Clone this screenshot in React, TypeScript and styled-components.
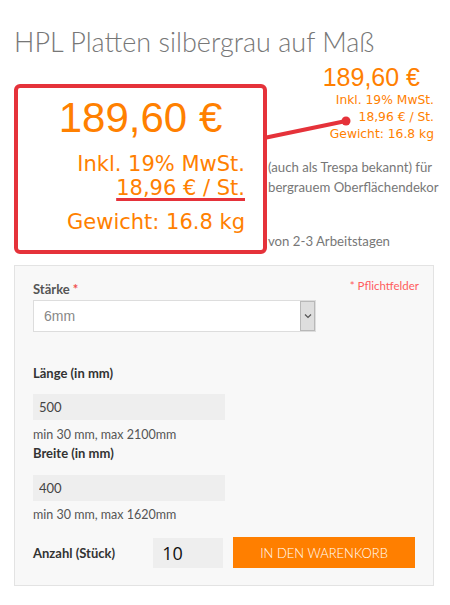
import React from 'react'
import styled, { createGlobalStyle } from 'styled-components'

const GlobalStyle = createGlobalStyle`
  html, body {
    margin: 0;
    padding: 0;
    background: #ffffff;
  }
  * {
    box-sizing: border-box;
  }
`

const ORANGE = '#ff8000'
const RED = '#e5323a'

const Page = styled.div`
  position: relative;
  width: 450px;
  padding: 0 16px 0 14px;
  font-family: 'Lato', 'Open Sans', sans-serif;
`

const Title = styled.h1`
  margin: 0;
  padding-top: 25px;
  font-size: 27px;
  line-height: 33px;
  font-weight: 300;
  color: #777777;
`

const PriceBox = styled.div`
  margin-top: 4px;
  text-align: right;
  color: ${ORANGE};
`

const BigPrice = styled.div`
  font-family: 'Liberation Sans', Arial, sans-serif;
  font-size: 25px;
  line-height: 30px;
  margin-right: 14px;
`

const PriceLine = styled.div`
  font-family: 'DejaVu Sans', Verdana, sans-serif;
  font-size: 12.3px;
  line-height: 17px;
`

const Description = styled.div`
  margin-top: 14px;
  font-size: 13.2px;
  line-height: 20px;
  color: #777777;
`

const Paragraph = styled.p`
  margin: 0 0 14px;
`

// the start of each line sits under the callout
const Line = styled.div`
  white-space: nowrap;
  padding-left: 254px;
  min-height: 20px;
`

// Callout annotation laid over the description
const Callout = styled.div`
  position: absolute;
  left: 14px;
  top: 84px;
  width: 253px;
  height: 170px;
  border: 4px solid ${RED};
  border-radius: 6px;
  background: #ffffff;
  color: ${ORANGE};
  padding: 6px 18px 0 0;
  text-align: right;
`

const CalloutPrice = styled.div`
  font-family: 'Liberation Sans', Arial, sans-serif;
  font-size: 42px;
  line-height: 48px;
  text-align: center;
  padding-left: 18px;
`

const CalloutLine = styled.div<{ $gap?: number }>`
  font-family: 'DejaVu Sans', Verdana, sans-serif;
  font-size: 21px;
  line-height: 24px;
  margin-top: ${p => p.$gap ?? 0}px;
`

const Marked = styled.span`
  text-decoration: underline;
  text-decoration-color: ${RED};
  text-decoration-thickness: 3px;
  text-underline-offset: 3px;
`

const Pointer = styled.svg`
  position: absolute;
  left: 262px;
  top: 112px;
`

const Panel = styled.div`
  margin-top: 13px;
  background: #f8f8f8;
  border: 1px solid #e3e3e3;
  padding: 14px 18px 17px;
`

const HeaderRow = styled.div`
  display: flex;
  justify-content: space-between;
  align-items: flex-start;
`

const Label = styled.div<{ $strong?: boolean }>`
  font-size: 13px;
  line-height: 18px;
  font-weight: 700;
  color: ${p => (p.$strong ? '#333333' : '#555555')};
`

const Star = styled.span`
  color: #f05050;
`

const Required = styled.div`
  font-size: 11.5px;
  line-height: 16px;
  color: #ff5c5c;
  margin-right: -4px;
  margin-top: -2px;
`

const SelectBox = styled.div`
  display: flex;
  width: 283px;
  height: 32px;
  margin-top: 2px;
  background: #ffffff;
  border: 1px solid #dddddd;
`

const SelectValue = styled.div`
  flex: 1;
  padding-left: 10px;
  font-family: 'Liberation Sans', Arial, sans-serif;
  font-size: 14px;
  line-height: 30px;
  color: #888888;
`

const SelectArrow = styled.div`
  width: 15px;
  display: flex;
  align-items: center;
  justify-content: center;
  background: #dedede;
  border: 1px solid #b8b8b8;
`

const Field = styled.div<{ $top: number }>`
  margin-top: ${p => p.$top}px;
`

const TextInput = styled.input<{ $width: number; $big?: boolean }>`
  display: block;
  width: ${p => p.$width}px;
  height: ${p => (p.$big ? 30 : 26)}px;
  border: none;
  outline: none;
  background: #eeeeee;
  padding: 0 ${p => (p.$big ? 9 : 6)}px;
  font-family: ${p => (p.$big ? "'Open Sans', sans-serif" : "'Lato', sans-serif")};
  font-size: ${p => (p.$big ? 18 : 13)}px;
  color: ${p => (p.$big ? '#111111' : '#444444')};
`

const Hint = styled.div<{ $top: number }>`
  margin-top: ${p => p.$top}px;
  font-size: 12.5px;
  line-height: 18px;
  color: #555555;
`

const CartRow = styled.div`
  display: flex;
  align-items: center;
  margin-top: 13px;
`

const QtyLabel = styled(Label)`
  width: 121px;
`

const CartButton = styled.button`
  margin-left: 10px;
  width: 183px;
  height: 31px;
  border: none;
  background: #ff7f00;
  color: #ffffff;
  font-family: 'Lato', sans-serif;
  font-size: 13px;
  font-weight: 300;
  text-transform: uppercase;
  cursor: pointer;
`

export default function App() {
  return (
    <>
      <GlobalStyle />
      <Page>
        <Title>HPL Platten silbergrau auf Maß</Title>

        <PriceBox>
          <BigPrice>189,60 €</BigPrice>
          <PriceLine>Inkl. 19% MwSt.</PriceLine>
          <PriceLine>18,96 € / St.</PriceLine>
          <PriceLine>Gewicht: 16.8 kg</PriceLine>
        </PriceBox>

        <Description>
          <Paragraph>
            <Line>(auch als Trespa bekannt) für</Line>
            <Line>bergrauem Oberflächendekor</Line>
            <Line />
          </Paragraph>
          <Paragraph>
            <Line>von 2-3 Arbeitstagen</Line>
          </Paragraph>
        </Description>

        <Callout>
          <CalloutPrice>189,60 €</CalloutPrice>
          <CalloutLine $gap={10}>Inkl. 19% MwSt.</CalloutLine>
          <CalloutLine><Marked>18,96 € / St.</Marked></CalloutLine>
          <CalloutLine $gap={10}>Gewicht: 16.8 kg</CalloutLine>
        </Callout>
        <Pointer width="92" height="34" viewBox="0 0 92 34">
          <line x1="2" y1="26" x2="84" y2="9" stroke={RED} strokeWidth="4" />
          <circle cx="84" cy="9" r="4.5" fill={RED} />
        </Pointer>

        <Panel>
          <HeaderRow>
            <Label>Stärke <Star>*</Star></Label>
            <Required>* Pflichtfelder</Required>
          </HeaderRow>
          <SelectBox>
            <SelectValue>6mm</SelectValue>
            <SelectArrow>
              <svg width="8" height="6" viewBox="0 0 8 6">
                <path d="M1 1.5 L4 4.5 L7 1.5" fill="none" stroke="#555" strokeWidth="1.2" />
              </svg>
            </SelectArrow>
          </SelectBox>

          <Field $top={32}>
            <Label $strong>Länge (in mm)</Label>
            <Field $top={12}>
              <TextInput $width={192} defaultValue="500" />
            </Field>
            <Hint $top={6}>min 30 mm, max 2100mm</Hint>
          </Field>

          <Field $top={0}>
            <Label $strong>Breite (in mm)</Label>
            <Field $top={13}>
              <TextInput $width={192} defaultValue="400" />
            </Field>
            <Hint $top={5}>min 30 mm, max 1620mm</Hint>
          </Field>

          <CartRow>
            <QtyLabel $strong>Anzahl (Stück)</QtyLabel>
            <TextInput $width={70} $big defaultValue="10" />
            <CartButton>In den Warenkorb</CartButton>
          </CartRow>
        </Panel>
      </Page>
    </>
  )
}
